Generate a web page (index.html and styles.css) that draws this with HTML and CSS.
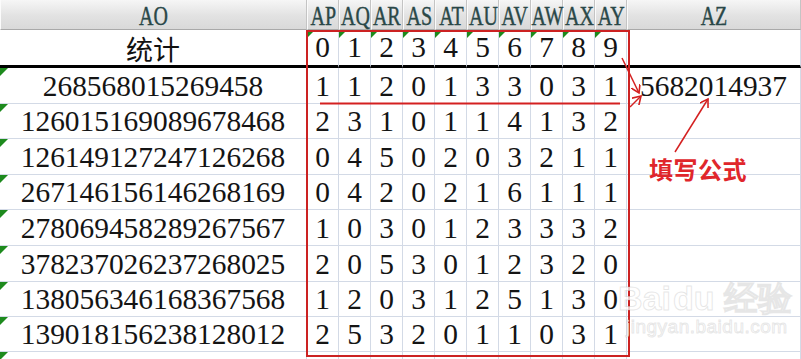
FILE: index.html
```html
<!DOCTYPE html>
<html lang="zh">
<head>
<meta charset="utf-8">
<title>统计</title>
<link rel="stylesheet" href="styles.css">
</head>
<body>
<div class="page">
  <div class="sheet">
    <div class="hd"><span class="h">AO</span></div><div class="hd"><span class="h">AP</span></div><div class="hd"><span class="h">AQ</span></div><div class="hd"><span class="h">AR</span></div><div class="hd"><span class="h">AS</span></div><div class="hd"><span class="h">AT</span></div><div class="hd"><span class="h">AU</span></div><div class="hd"><span class="h">AV</span></div><div class="hd"><span class="h">AW</span></div><div class="hd"><span class="h">AX</span></div><div class="hd"><span class="h">AY</span></div><div class="hd"><span class="h">AZ</span></div>

    <div class="c top cjk">统计</div>
    <div class="c top g"><span class="v">0</span></div><div class="c top g"><span class="v">1</span></div><div class="c top g"><span class="v">2</span></div><div class="c top g"><span class="v">3</span></div><div class="c top g"><span class="v">4</span></div><div class="c top g"><span class="v">5</span></div><div class="c top g"><span class="v">6</span></div><div class="c top g"><span class="v">7</span></div><div class="c top g"><span class="v">8</span></div><div class="c top g"><span class="v">9</span></div>
    <div class="c top"></div>

    <div class="c g"><span class="v">268568015269458</span></div>
    <div class="c"><span class="v">1</span></div><div class="c"><span class="v">1</span></div><div class="c"><span class="v">2</span></div><div class="c"><span class="v">0</span></div><div class="c"><span class="v">1</span></div><div class="c"><span class="v">3</span></div><div class="c"><span class="v">3</span></div><div class="c"><span class="v">0</span></div><div class="c"><span class="v">3</span></div><div class="c"><span class="v">1</span></div>
    <div class="c"><span class="v">5682014937</span></div>

    <div class="c g"><span class="v">126015169089678468</span></div>
    <div class="c"><span class="v">2</span></div><div class="c"><span class="v">3</span></div><div class="c"><span class="v">1</span></div><div class="c"><span class="v">0</span></div><div class="c"><span class="v">1</span></div><div class="c"><span class="v">1</span></div><div class="c"><span class="v">4</span></div><div class="c"><span class="v">1</span></div><div class="c"><span class="v">3</span></div><div class="c"><span class="v">2</span></div>
    <div class="c"></div>

    <div class="c g"><span class="v">126149127247126268</span></div>
    <div class="c"><span class="v">0</span></div><div class="c"><span class="v">4</span></div><div class="c"><span class="v">5</span></div><div class="c"><span class="v">0</span></div><div class="c"><span class="v">2</span></div><div class="c"><span class="v">0</span></div><div class="c"><span class="v">3</span></div><div class="c"><span class="v">2</span></div><div class="c"><span class="v">1</span></div><div class="c"><span class="v">1</span></div>
    <div class="c"></div>

    <div class="c g"><span class="v">267146156146268169</span></div>
    <div class="c"><span class="v">0</span></div><div class="c"><span class="v">4</span></div><div class="c"><span class="v">2</span></div><div class="c"><span class="v">0</span></div><div class="c"><span class="v">2</span></div><div class="c"><span class="v">1</span></div><div class="c"><span class="v">6</span></div><div class="c"><span class="v">1</span></div><div class="c"><span class="v">1</span></div><div class="c"><span class="v">1</span></div>
    <div class="c"></div>

    <div class="c g"><span class="v">278069458289267567</span></div>
    <div class="c"><span class="v">1</span></div><div class="c"><span class="v">0</span></div><div class="c"><span class="v">3</span></div><div class="c"><span class="v">0</span></div><div class="c"><span class="v">1</span></div><div class="c"><span class="v">2</span></div><div class="c"><span class="v">3</span></div><div class="c"><span class="v">3</span></div><div class="c"><span class="v">3</span></div><div class="c"><span class="v">2</span></div>
    <div class="c"></div>

    <div class="c g"><span class="v">378237026237268025</span></div>
    <div class="c"><span class="v">2</span></div><div class="c"><span class="v">0</span></div><div class="c"><span class="v">5</span></div><div class="c"><span class="v">3</span></div><div class="c"><span class="v">0</span></div><div class="c"><span class="v">1</span></div><div class="c"><span class="v">2</span></div><div class="c"><span class="v">3</span></div><div class="c"><span class="v">2</span></div><div class="c"><span class="v">0</span></div>
    <div class="c"></div>

    <div class="c g"><span class="v">138056346168367568</span></div>
    <div class="c"><span class="v">1</span></div><div class="c"><span class="v">2</span></div><div class="c"><span class="v">0</span></div><div class="c"><span class="v">3</span></div><div class="c"><span class="v">1</span></div><div class="c"><span class="v">2</span></div><div class="c"><span class="v">5</span></div><div class="c"><span class="v">1</span></div><div class="c"><span class="v">3</span></div><div class="c"><span class="v">0</span></div>
    <div class="c"></div>

    <div class="c g"><span class="v">139018156238128012</span></div>
    <div class="c"><span class="v">2</span></div><div class="c"><span class="v">5</span></div><div class="c"><span class="v">3</span></div><div class="c"><span class="v">2</span></div><div class="c"><span class="v">0</span></div><div class="c"><span class="v">1</span></div><div class="c"><span class="v">1</span></div><div class="c"><span class="v">0</span></div><div class="c"><span class="v">3</span></div><div class="c"><span class="v">1</span></div>
    <div class="c"></div>

    <div class="c g"></div><div class="c"></div><div class="c"></div><div class="c"></div><div class="c"></div><div class="c"></div><div class="c"></div><div class="c"></div><div class="c"></div><div class="c"></div><div class="c"></div><div class="c"></div>
  </div>

  <div class="redbox"></div>

  <svg class="notes" width="801" height="359" viewBox="0 0 801 359">
    <defs>
      <marker id="ah" markerWidth="10" markerHeight="10" refX="8" refY="5" orient="auto" markerUnits="userSpaceOnUse">
        <path d="M0,0 L8,5 L0,10" fill="none" stroke="#d42020" stroke-width="1.6"/>
      </marker>
    </defs>
    <line x1="320" y1="103.5" x2="620" y2="103.5" stroke="#d42020" stroke-width="2"/>
    <line x1="622" y1="58" x2="639" y2="93" stroke="#d42020" stroke-width="1.5" marker-end="url(#ah)"/>
    <line x1="630" y1="107" x2="641" y2="96" stroke="#d42020" stroke-width="1.5" marker-end="url(#ah)"/>
    <line x1="675" y1="152" x2="708" y2="99" stroke="#d42020" stroke-width="1.5" marker-end="url(#ah)"/>
  </svg>

  <div class="note">填写公式</div>

  <div class="mark">
    <div class="mark-top">Bai<span class="paw">du</span> 经验</div>
    <div class="mark-url">jingyan.baidu.com</div>
  </div>
</div>
</body>
</html>
```

FILE: styles.css
```css
html, body {
  margin: 0;
  padding: 0;
  background: #ffffff;
}

.page {
  position: relative;
  width: 801px;
  height: 359px;
  overflow: hidden;
}

.sheet {
  display: grid;
  grid-template-columns: 307px repeat(10, 32px) 174px;
  grid-template-rows: 30px 38px 35.5px 35.5px 36px 35px 36px 36px 35px 35px 20px;
  font-family: "Liberation Serif", "Times New Roman", serif;
  color: #141414;
}

.hd {
  box-sizing: border-box;
  display: flex;
  align-items: center;
  justify-content: center;
  background: linear-gradient(#f6f6f6, #e2e2e2 55%, #d9d9d9);
  border-right: 1px solid #c4c4c4;
  border-left: 1px solid #fbfbfb;
  border-bottom: 1px solid #a9a9a9;
  color: #2a4848;
  font-family: "Liberation Serif", "Times New Roman", serif;
  font-size: 27px;
  padding-top: 3px;
  white-space: nowrap;
  overflow: visible;
}

.h {
  display: inline-block;
  line-height: 1;
  transform: scaleX(0.74);
  -webkit-text-stroke: 0.4px #2a4848;
}

.c {
  position: relative;
  box-sizing: border-box;
  display: flex;
  align-items: center;
  justify-content: center;
  border-right: 1px solid #d3dae6;
  border-bottom: 1px solid #d3dae6;
  font-size: 29.4px;
  padding-top: 2px;
  white-space: nowrap;
  overflow: visible;
}

.c.top {
  border-bottom: 3px solid #000;
  padding-top: 1px;
}

.v {
  display: inline-block;
  line-height: 1;
}

.cjk {
  font-family: "Noto Sans CJK SC", sans-serif;
  font-size: 27px;
  color: #111;
}

.g::before {
  content: "";
  position: absolute;
  left: 0;
  top: 0;
  width: 0;
  height: 0;
  border-top: 8px solid #1d8a1d;
  border-right: 8px solid transparent;
}

.redbox {
  position: absolute;
  left: 306px;
  top: 30px;
  width: 324px;
  height: 327px;
  box-sizing: border-box;
  border: 2px solid #cc2222;
}

.notes {
  position: absolute;
  left: 0;
  top: 0;
}

.note {
  position: absolute;
  left: 649px;
  top: 151px;
  font-family: "Noto Sans CJK SC", sans-serif;
  font-size: 24px;
  font-weight: 700;
  color: #e0262b;
  letter-spacing: 0.5px;
}

.mark {
  position: absolute;
  left: 618px;
  top: 280px;
  color: rgba(255, 255, 255, 0.75);
  -webkit-text-stroke: 1px rgba(185, 185, 185, 0.35);
  font-family: "Liberation Sans", sans-serif;
}

.mark-top {
  font-size: 34px;
  font-weight: 700;
  line-height: 36px;
}

.mark-top .paw {
  margin-left: 2px;
}

.mark-url {
  font-size: 19px;
  line-height: 22px;
  margin-left: 8px;
  letter-spacing: 0.5px;
}
```
